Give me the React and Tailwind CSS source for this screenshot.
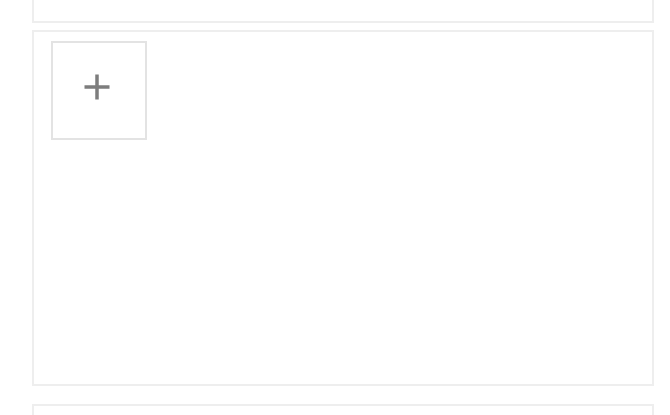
import React from 'react';

const PlusIcon = () => (
  <svg width="28" height="28" viewBox="0 0 28 28" fill="none">
    <path d="M14 1.5v25M1.5 14h25" stroke="#7d7d7d" strokeWidth="3.5" />
  </svg>
);

const UploadTile = () => (
  <button className="flex h-[99px] w-[96px] items-center justify-center border-2 border-[#e3e3e3] bg-white pb-[7px] pr-[4px]">
    <PlusIcon />
  </button>
);

const App = () => (
  <div className="h-screen w-full overflow-hidden bg-white font-['Liberation_Sans',sans-serif]">
    <div className="ml-[32px] w-[622px]">
      <div className="h-[23px] border-2 border-t-0 border-[#eeeeee]" />
      <div className="mt-[7px] h-[356px] border-2 border-[#eeeeee] pl-[17px] pt-[9px]">
        <UploadTile />
      </div>
      <div className="mt-[18px] h-[40px] border-2 border-[#eeeeee]" />
    </div>
  </div>
);

export default App;
